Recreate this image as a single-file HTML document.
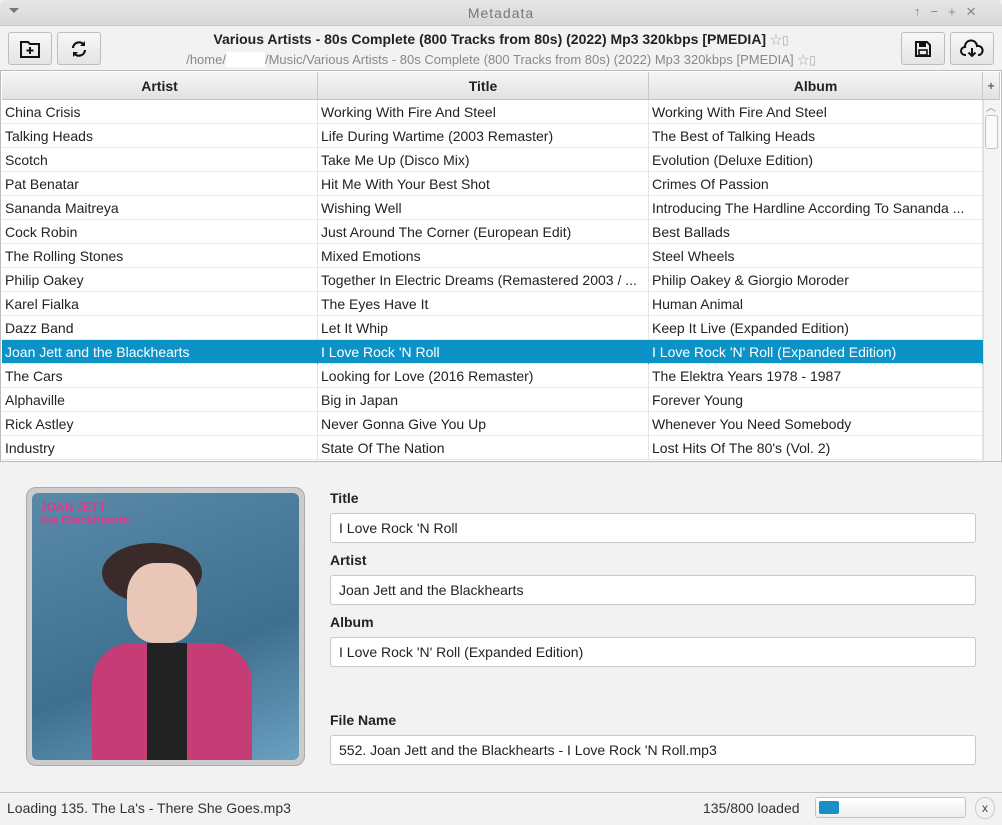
<!DOCTYPE html><html><head><style>
*{box-sizing:border-box;margin:0;padding:0}
body{width:1002px;height:825px;overflow:hidden;background:#f2f2f2;font-family:"Liberation Sans","Noto Sans CJK JP",sans-serif;font-size:14px;color:#222;position:relative}
.abs{position:absolute}
.tb{left:0;top:0;width:1002px;height:26px;background:linear-gradient(#e6e6e6,#d8d8d8);border-bottom:1px solid #c8c8c8;border-radius:6px 6px 0 0}
.btn{position:absolute;width:44px;height:33px;border:1px solid #bdbdbd;border-radius:3px;background:linear-gradient(#f7f7f7,#e4e4e4);display:flex;align-items:center;justify-content:center}
.hdr{top:72px;height:28px;background:linear-gradient(#f6f6f6,#e2e2e2);border-bottom:1px solid #c4c4c4;border-right:1px solid #c8c8c8;font-weight:bold;text-align:center;line-height:28px;font-size:14px}
.row{position:absolute;left:2px;width:981px;height:24px;border-bottom:1px solid #e8e8e8;background:#fff}
.row span{position:absolute;top:0;line-height:24px;white-space:nowrap;overflow:hidden;border-right:1px solid #e4e4e4;height:24px;padding-left:3px}
.row span:nth-child(1){left:0;width:316px}.row span:nth-child(2){left:316px;width:331px}.row span:nth-child(3){left:647px;width:334px}
.sel{background:#0b93c7;color:#fff}.sel span{border-color:#0b93c7}
.lbl{position:absolute;left:330px;font-weight:bold;font-size:14px}
.inp{position:absolute;left:330px;width:646px;height:30px;border:1px solid #c8c8c8;border-radius:3px;background:#fff;line-height:28px;padding-left:8px}
.st{color:#aaa;font-weight:normal;font-size:12px}
</style></head><body>
<div class="abs tb"></div>
<div class="abs" style="left:9px;top:8px;width:0;height:0;border-left:5px solid transparent;border-right:5px solid transparent;border-top:5px solid #777"></div>
<div class="abs" style="left:0;width:1002px;top:5px;text-align:center;color:#777;font-size:14px;letter-spacing:1px">Metadata</div>
<div class="abs" style="left:914px;top:4px;color:#888;font-size:13px;letter-spacing:10px">↑−+✕</div>
<div class="btn" style="left:8px;top:32px"><svg width="22" height="20" viewBox="0 0 22 20"><path d="M2 3h7l2 2h9v13H2z" fill="none" stroke="#111" stroke-width="2"/><path d="M11 8v7M7.5 11.5h7" stroke="#111" stroke-width="2"/></svg></div>
<div class="btn" style="left:57px;top:32px"><svg width="20" height="20" viewBox="0 0 20 20"><path d="M4 9a6 6 0 0 1 11-3M16 11a6 6 0 0 1-11 3" fill="none" stroke="#111" stroke-width="2.2"/><path d="M16 2v5h-5zM4 18v-5h5z" fill="#111"/></svg></div>
<div class="btn" style="left:901px;top:32px"><svg width="20" height="20" viewBox="0 0 20 20"><path d="M3 3h11l3 3v11H3z" fill="none" stroke="#111" stroke-width="2"/><rect x="6" y="4" width="7" height="4" fill="#111"/><rect x="6" y="11" width="8" height="5" fill="none" stroke="#111" stroke-width="1.6"/></svg></div>
<div class="btn" style="left:950px;top:32px"><svg width="24" height="20" viewBox="0 0 24 20"><path d="M6 16H5a4 4 0 0 1 0-8 6 6 0 0 1 12-1 4.5 4.5 0 0 1 2 9h-1" fill="none" stroke="#111" stroke-width="2"/><path d="M12 9v8M8.5 13.5l3.5 3.5 3.5-3.5" fill="none" stroke="#111" stroke-width="2"/></svg></div>
<div class="abs" style="left:0;width:1002px;top:31px;text-align:center;font-weight:bold;font-size:14px">Various Artists - 80s Complete (800 Tracks from 80s) (2022) Mp3 320kbps [PMEDIA] <span class="st">☆▯</span></div>
<div class="abs" style="left:0;width:1002px;top:51px;text-align:center;color:#888;font-size:13px">/home/<span style="background:#fff;color:#fff">xxxxxx</span>/Music/Various Artists - 80s Complete (800 Tracks from 80s) (2022) Mp3 320kbps [PMEDIA] <span class="st">☆▯</span></div>
<div class="abs" style="left:0;top:70px;width:1002px;height:392px;border:1px solid #bbb;background:#fff"></div>
<div class="abs hdr" style="left:2px;width:316px">Artist</div>
<div class="abs hdr" style="left:318px;width:331px">Title</div>
<div class="abs hdr" style="left:649px;width:334px">Album</div>
<div class="abs hdr" style="left:983px;width:17px;font-size:12px;color:#666">+</div>
<div class="abs" style="left:983px;top:100px;width:17px;height:361px;background:#f4f4f4;border-left:1px solid #ddd"></div>
<div class="abs" style="left:986px;top:99px;font-size:10px;color:#888">︿</div>
<div class="abs" style="left:985px;top:115px;width:13px;height:34px;border:1px solid #c4c4c4;border-radius:3px;background:#fafafa"></div>
<div class="row" style="top:100px"><span>China Crisis</span><span>Working With Fire And Steel</span><span>Working With Fire And Steel</span></div>
<div class="row" style="top:124px"><span>Talking Heads</span><span>Life During Wartime (2003 Remaster)</span><span>The Best of Talking Heads</span></div>
<div class="row" style="top:148px"><span>Scotch</span><span>Take Me Up (Disco Mix)</span><span>Evolution (Deluxe Edition)</span></div>
<div class="row" style="top:172px"><span>Pat Benatar</span><span>Hit Me With Your Best Shot</span><span>Crimes Of Passion</span></div>
<div class="row" style="top:196px"><span>Sananda Maitreya</span><span>Wishing Well</span><span>Introducing The Hardline According To Sananda ...</span></div>
<div class="row" style="top:220px"><span>Cock Robin</span><span>Just Around The Corner (European Edit)</span><span>Best Ballads</span></div>
<div class="row" style="top:244px"><span>The Rolling Stones</span><span>Mixed Emotions</span><span>Steel Wheels</span></div>
<div class="row" style="top:268px"><span>Philip Oakey</span><span>Together In Electric Dreams (Remastered 2003 / ...</span><span>Philip Oakey &amp; Giorgio Moroder</span></div>
<div class="row" style="top:292px"><span>Karel Fialka</span><span>The Eyes Have It</span><span>Human Animal</span></div>
<div class="row" style="top:316px"><span>Dazz Band</span><span>Let It Whip</span><span>Keep It Live (Expanded Edition)</span></div>
<div class="row sel" style="top:340px"><span>Joan Jett and the Blackhearts</span><span>I Love Rock 'N Roll</span><span>I Love Rock 'N' Roll (Expanded Edition)</span></div>
<div class="row" style="top:364px"><span>The Cars</span><span>Looking for Love (2016 Remaster)</span><span>The Elektra Years 1978 - 1987</span></div>
<div class="row" style="top:388px"><span>Alphaville</span><span>Big in Japan</span><span>Forever Young</span></div>
<div class="row" style="top:412px"><span>Rick Astley</span><span>Never Gonna Give You Up</span><span>Whenever You Need Somebody</span></div>
<div class="row" style="top:436px"><span>Industry</span><span>State Of The Nation</span><span>Lost Hits Of The 80's (Vol. 2)</span></div>
<div class="abs" style="left:26px;top:487px;width:279px;height:279px;border-radius:10px;background:#ccc;border:1px solid #aaa;padding:5px">
<div style="width:100%;height:100%;border-radius:6px;background:linear-gradient(160deg,#5a8aa9,#3f6f8f 60%,#6aa0c0);position:relative;overflow:hidden">
<div style="position:absolute;left:8px;top:8px;color:#e03a8a;font-size:12px;line-height:13px;font-weight:bold">JOAN JETT<br>the Blackhearts</div>
<div style="position:absolute;left:70px;top:50px;width:100px;height:60px;background:#3a2a2a;border-radius:50%"></div>
<div style="position:absolute;left:95px;top:70px;width:70px;height:80px;background:#e9c7b8;border-radius:40%"></div>
<div style="position:absolute;left:60px;top:150px;width:160px;height:130px;background:#c63c77;border-radius:40px 40px 0 0"></div>
<div style="position:absolute;left:115px;top:150px;width:40px;height:130px;background:#222"></div>
</div></div>
<div class="lbl" style="top:490px">Title</div><div class="inp" style="top:513px">I Love Rock 'N Roll</div>
<div class="lbl" style="top:552px">Artist</div><div class="inp" style="top:575px">Joan Jett and the Blackhearts</div>
<div class="lbl" style="top:614px">Album</div><div class="inp" style="top:637px">I Love Rock 'N' Roll (Expanded Edition)</div>
<div class="lbl" style="top:712px">File Name</div><div class="inp" style="top:735px">552. Joan Jett and the Blackhearts - I Love Rock 'N Roll.mp3</div>
<div class="abs" style="left:0;top:792px;width:1002px;height:33px;border-top:1px solid #c4c4c4;background:#f2f2f2"></div>
<div class="abs" style="left:7px;top:800px;font-size:14px;color:#333">Loading 135. The La's - There She Goes.mp3</div>
<div class="abs" style="left:703px;top:800px;font-size:14px;color:#333">135/800 loaded</div>
<div class="abs" style="left:815px;top:797px;width:151px;height:21px;border:1px solid #c4c4c4;border-radius:3px;background:linear-gradient(#fff,#eee)"><div style="margin:3px;width:20px;height:13px;background:#1a8fc6;border-radius:2px"></div></div>
<div class="abs" style="left:975px;top:797px;width:20px;height:22px;border:1px solid #ccc;border-radius:10px;text-align:center;font-size:12px;line-height:20px;color:#444">x</div>
</body></html>
